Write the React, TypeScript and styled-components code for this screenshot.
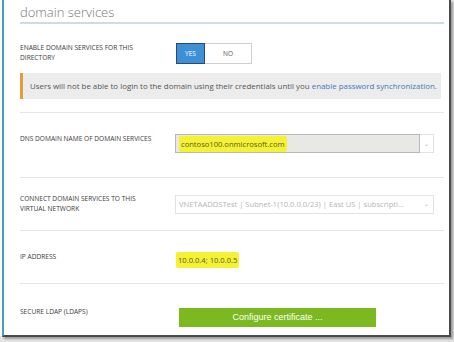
import styled, { createGlobalStyle } from "styled-components";

const GlobalStyle = createGlobalStyle`
  html, body {
    margin: 0;
    padding: 0;
    background: #e4e4e4;
  }
  body {
    font-family: "Open Sans", "Noto Sans", sans-serif;
    width: 454px;
    height: 342px;
    overflow: hidden;
  }
`;

const Page = styled.div`
  padding-left: 2px;
  width: 452px;
  background: linear-gradient(#fafafa, #fafafa) no-repeat 0 0 / 2px 336px;
`;

const Frame = styled.div`
  box-sizing: border-box;
  width: 449px;
  height: 337px;
  background: #fff;
  border-left: 2px solid #4f9cb8;
  border-right: 2px solid #4a4a4a;
  border-bottom: 2px solid #4a4a4a;
  box-shadow: 2px 2px 2px #9a9a9a;
  padding: 0 5px 0 16px;
`;

const Title = styled.h1`
  margin: 0;
  padding: 4px 0 2px 0;
  font-family: "Open Sans", sans-serif;
  font-weight: 300;
  font-size: 13px;
  line-height: 16px;
  color: #777;
  border-bottom: 2px solid #cfdde3;
`;

const Row = styled.div<{ $h: number; $divider?: boolean }>`
  display: grid;
  grid-template-columns: 156px 1fr;
  align-items: center;
  height: ${(p) => p.$h}px;
  border-bottom: ${(p) => (p.$divider ? "1px solid #e6e6e6" : "none")};
`;

const Label = styled.div<{ $top?: number }>`
  font-size: 6.6px;
  line-height: 10px;
  text-transform: uppercase;
  color: #3a3a3a;
  padding-right: 4px;
  white-space: nowrap;
  ${(p) => (p.$top !== undefined ? `align-self: start; padding-top: ${p.$top}px;` : "")}
`;

const Toggle = styled.div`
  display: flex;
  height: 21px;
`;

const ToggleOption = styled.div<{ $on?: boolean }>`
  box-sizing: border-box;
  display: flex;
  align-items: center;
  justify-content: center;
  width: ${(p) => (p.$on ? 29 : 47)}px;
  font-size: 6.5px;
  color: ${(p) => (p.$on ? "#fff" : "#555")};
  background: ${(p) => (p.$on ? "#3d8fd6" : "#fff")};
  border: 1px solid ${(p) => (p.$on ? "#2a4a6a" : "#cfcfcf")};
  ${(p) => (p.$on ? "" : "border-left: none;")}
`;

const Notice = styled.div`
  margin-top: 6px;
  height: 26px;
  box-sizing: border-box;
  width: 421px;
  display: flex;
  align-items: center;
  padding-left: 7px;
  background: #ececec;
  border-left: 3px solid #e59a3c;
  font-size: 7.9px;
  color: #555;
  white-space: nowrap;
`;

const Link = styled.span`
  color: #4777b8;
`;

const Spacer = styled.div<{ $h: number; $divider?: boolean }>`
  height: ${(p) => p.$h}px;
  border-bottom: ${(p) => (p.$divider ? "1px solid #e6e6e6" : "none")};
`;

const Field = styled.div<{ $top?: number }>`
  display: flex;
  align-items: center;
  width: 259px;
  height: 19px;
  margin-left: -1px;
  ${(p) => (p.$top !== undefined ? `align-self: start; margin-top: ${p.$top}px;` : "")}
`;

const FieldBox = styled.div<{ $filled?: boolean }>`
  flex: 1;
  box-sizing: border-box;
  height: 100%;
  display: flex;
  align-items: center;
  padding-left: 3px;
  background: ${(p) => (p.$filled ? "#e8e8e4" : "#fff")};
  border: 1px solid ${(p) => (p.$filled ? "#b9b9b5" : "#e2e2e2")};
  border-right: ${(p) => (p.$filled ? "1px solid #b9b9b5" : "none")};
  font-size: 7.6px;
  color: #b5b5b5;
  white-space: nowrap;
  overflow: hidden;
`;

const Caret = styled.div`
  box-sizing: border-box;
  width: 14px;
  height: 100%;
  display: flex;
  align-items: center;
  justify-content: center;
  border: 1px solid #e2e2e2;
  border-left: none;
  font-size: 6px;
  color: #aaa;
`;

const Highlight = styled.span`
  background: #f4f232;
  color: #5a5a3a;
  font-size: 7.6px;
  padding: 3px 2px;
  border-radius: 2px;
`;

const ButtonCell = styled.div`
  align-self: start;
  padding-top: 19px;
`;

const GreenButton = styled.button`
  width: 197px;
  height: 19px;
  margin-left: 3px;
  border: none;
  background: #7cb81f;
  color: #fff;
  font-family: "Liberation Sans", Arial, sans-serif;
  font-size: 9px;
  padding: 0;
`;

export default function App() {
  return (
    <>
      <GlobalStyle />
      <Page>
        <Frame>
          <Title>domain services</Title>
          <Spacer $h={15} />
          <Row $h={28}>
            <Label>
              Enable domain services for this
              <br />
              directory
            </Label>
            <Toggle>
              <ToggleOption $on>YES</ToggleOption>
              <ToggleOption>NO</ToggleOption>
            </Toggle>
          </Row>
          <Notice>
            Users will not be able to login to the domain using their credentials until you&nbsp;
            <Link>enable password synchronization.</Link>
          </Notice>
          <Spacer $h={13} $divider />
          <Row $h={64} $divider>
            <Label $top={21}>DNS domain name of domain services</Label>
            <Field $top={21}>
              <FieldBox $filled>
                <Highlight>contoso100.onmicrosoft.com</Highlight>
              </FieldBox>
              <Caret>⌄</Caret>
            </Field>
          </Row>
          <Row $h={52} $divider>
            <Label>
              Connect domain services to this
              <br />
              virtual network
            </Label>
            <Field>
              <FieldBox>VNETAADDSTest | Subnet-1(10.0.0.0/23) | East US | subscripti...</FieldBox>
              <Caret>⌄</Caret>
            </Field>
          </Row>
          <Row $h={52} $divider>
            <Label>IP address</Label>
            <div>
              <Highlight>10.0.0.4; 10.0.0.5</Highlight>
            </div>
          </Row>
          <Row $h={48}>
            <Label $top={23}>Secure LDAP (LDAPS)</Label>
            <ButtonCell>
              <GreenButton>Configure certificate ...</GreenButton>
            </ButtonCell>
          </Row>
        </Frame>
      </Page>
    </>
  );
}
